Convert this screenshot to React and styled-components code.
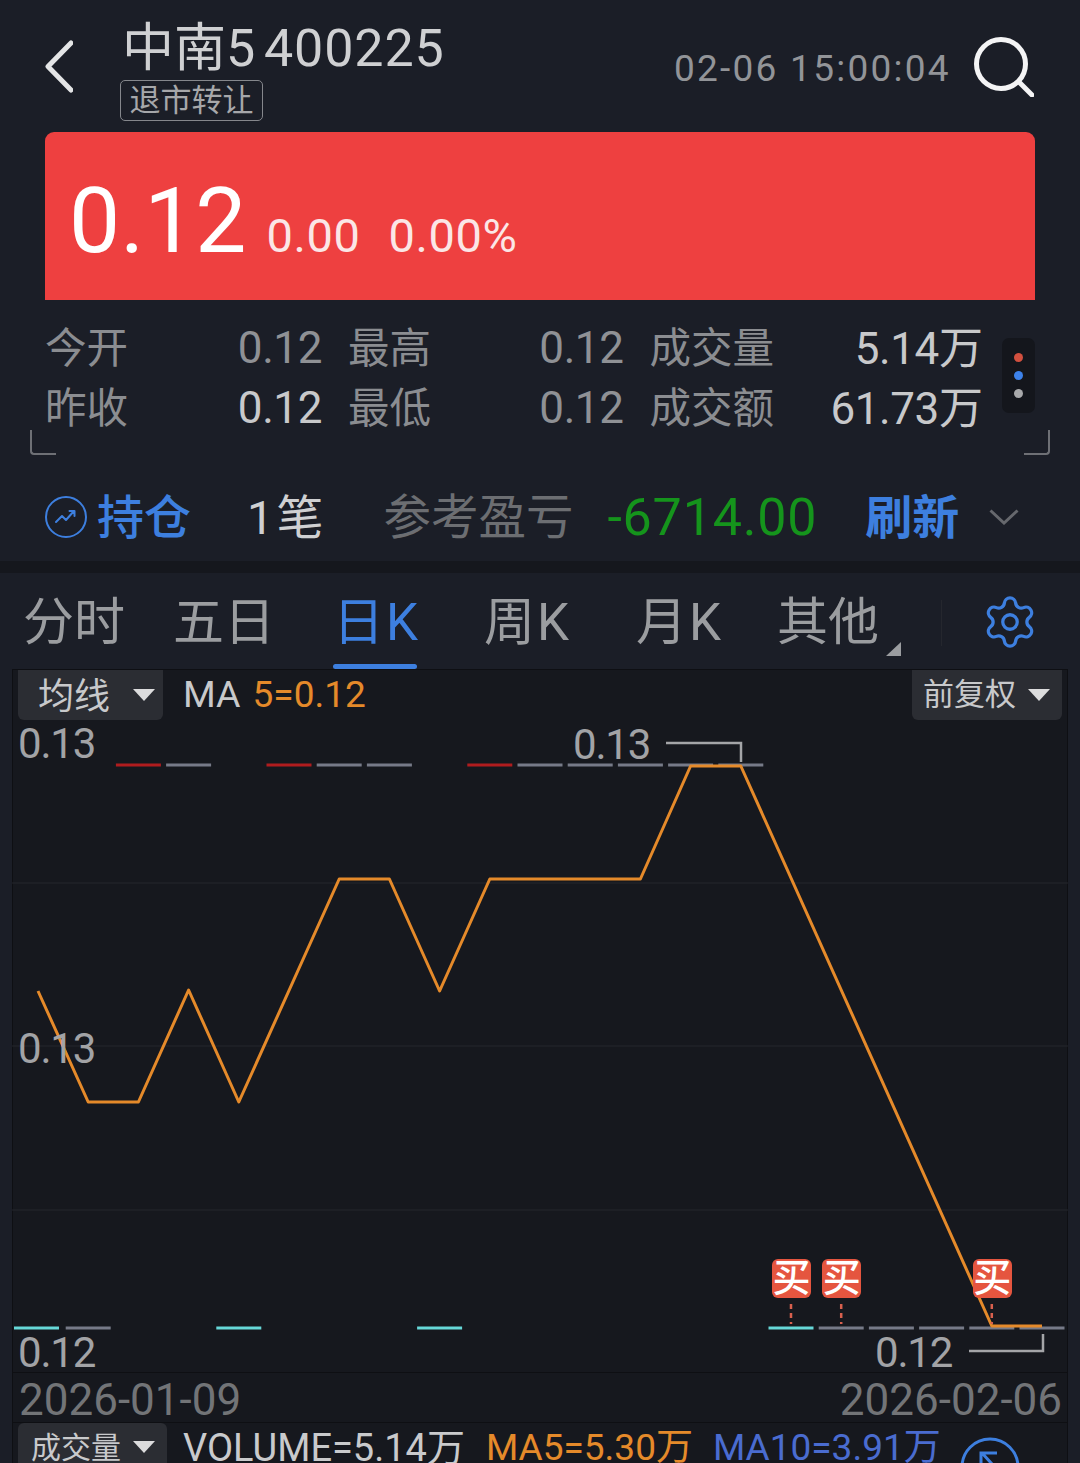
import React from 'react';
import styled, { createGlobalStyle } from 'styled-components';
import { Settings } from 'lucide-react';

const STEP = 50.2;
const xAt = (i) => 38 + STEP * i;

const LINE = [
  [0, 991], [1, 1102], [2, 1102], [3, 990], [4, 1102], [6, 879], [7, 879], [8, 991],
  [9, 879], [12, 879], [13, 766], [14, 766], [19, 1326], [20, 1326],
];
const TOP_DASHES = [[2, '#b01c1e'], [3, '#767a88'], [5, '#b01c1e'], [6, '#767a88'], [7, '#767a88'], [9, '#b01c1e'], [10, '#767a88'], [11, '#767a88'], [12, '#767a88'], [13, '#767a88'], [14, '#767a88']];
const BOTTOM_DASHES = [[-0.03, '#66d8d8'], [1, '#767a88'], [4, '#66d8d8'], [8, '#66d8d8'], [15, '#66d8d8'], [16, '#767a88'], [17, '#767a88'], [18, '#767a88'], [19, '#767a88'], [20, '#767a88']];
const BUY_MARKS = [15, 16, 19];
const GRID_Y = [883, 1046, 1210];

const App = () => {
  return (
    <Page>
      <GlobalStyle />
      <Header>
        <BackIcon viewBox="0 0 28 54">
          <path d="M26 3 L3 26.5 L26 50" />
        </BackIcon>
        <TitleBlock>
          <Title><TitleName>中南</TitleName>5 400225</Title>
          <Tag>退市转让</Tag>
        </TitleBlock>
        <Clock>02-06 15:00:04</Clock>
        <SearchIcon viewBox="0 0 60 60">
          <circle cx="27" cy="27" r="24.5" />
          <path d="M45 45 L58 58" />
        </SearchIcon>
      </Header>

      <PriceCard>
        <BigPrice>0.12</BigPrice>
        <Change>0.00</Change>
        <Change>0.00%</Change>
      </PriceCard>

      <Stats>
        <StatGrid>
          <Stat><StatLabel>今开</StatLabel><StatValue>0.12</StatValue></Stat>
          <Stat><StatLabel>最高</StatLabel><StatValue>0.12</StatValue></Stat>
          <Stat><StatLabel>成交量</StatLabel><StatValue $light $unit>5.14万</StatValue></Stat>
          <Stat><StatLabel>昨收</StatLabel><StatValue $light>0.12</StatValue></Stat>
          <Stat><StatLabel>最低</StatLabel><StatValue>0.12</StatValue></Stat>
          <Stat><StatLabel>成交额</StatLabel><StatValue $light $unit>61.73万</StatValue></Stat>
        </StatGrid>
        <DotsPill>
          <Dot $color="#d2503f" />
          <Dot $color="#3d82ea" />
          <Dot $color="#a8a9ab" />
        </DotsPill>
        <Corner $side="left" />
        <Corner $side="right" />
      </Stats>

      <PositionRow>
        <TrendIcon viewBox="0 0 42 42">
          <circle cx="21" cy="21" r="20" />
          <path d="M11 26 L17 20 L21 24 L29 15 M24.5 15 H29.5 V20" />
        </TrendIcon>
        <PositionTitle>持仓</PositionTitle>
        <PositionCount>1笔</PositionCount>
        <PnlLabel>参考盈亏</PnlLabel>
        <PnlValue>-6714.00</PnlValue>
        <Refresh>刷新</Refresh>
        <ChevronIcon viewBox="0 0 30 16">
          <path d="M1.5 1.5 L15 14 L28.5 1.5" />
        </ChevronIcon>
      </PositionRow>

      <Band />

      <Tabs>
        <Tab $left={23}>分时</Tab>
        <Tab $left={48}>五日</Tab>
        <Tab $left={58} $active $latin>日K</Tab>
        <Tab $left={64} $latin>周K</Tab>
        <Tab $left={65} $latin>月K</Tab>
        <Tab $left={54} $more>其他</Tab>
        <TabDivider />
        <GearBox>
          <Settings size={58} strokeWidth={1.35} color="#3d7fdf" />
        </GearBox>
      </Tabs>

      <ChartPanel>
        <Plot>
          <ChartSvg viewBox="12 669 1056 704">
            {GRID_Y.map((y) => (
              <line key={y} x1="12" x2="1068" y1={y} y2={y} stroke="#24262c" strokeWidth="1" />
            ))}
            {TOP_DASHES.map(([i, c]) => (
              <rect key={i} x={xAt(i) - 22.5} y="763.5" width="45" height="3" fill={c} />
            ))}
            {BOTTOM_DASHES.map(([i, c]) => (
              <rect key={i} x={xAt(i) - 22.5} y="1326.5" width="45" height="3" fill={c} />
            ))}
            <polyline
              points={LINE.map(([i, y]) => `${xAt(i)},${y}`).join(' ')}
              fill="none"
              stroke="#e58a2a"
              strokeWidth="3"
              strokeLinejoin="round"
            />
            {BUY_MARKS.map((i) => (
              <line key={i} x1={xAt(i)} x2={xAt(i)} y1="1304" y2="1324" stroke="#d8604e" strokeWidth="2.5" strokeDasharray="5 4" />
            ))}
            <path d="M666 743 H741 V762" fill="none" stroke="#a4a5a8" strokeWidth="2.5" />
            <path d="M969 1351 H1043 V1334" fill="none" stroke="#a4a5a8" strokeWidth="2.5" />
          </ChartSvg>

          <Toolbar>
            <Dropdown $width={145}>
              <DropdownText>均线</DropdownText>
              <Caret />
            </Dropdown>
            <MaLabel>MA</MaLabel>
            <MaValue>5=0.12</MaValue>
            <Spacer />
            <Dropdown $width={150} $small>
              <DropdownText $small>前复权</DropdownText>
              <Caret />
            </Dropdown>
          </Toolbar>

          <PriceTag $x={6} $y={51}>0.13</PriceTag>
          <PriceTag $x={6} $y={356}>0.13</PriceTag>
          <PriceTag $x={6} $y={660}>0.12</PriceTag>
          <PriceTag $x={561} $y={52}>0.13</PriceTag>
          <PriceTag $x={863} $y={660}>0.12</PriceTag>

          {BUY_MARKS.map((i) => (
            <BuyMark key={i} style={{ left: xAt(i) - 12 - 19 }}>买</BuyMark>
          ))}
        </Plot>

        <DateRow>
          <DateText>2026-01-09</DateText>
          <DateText>2026-02-06</DateText>
        </DateRow>

        <VolumeRow>
          <Dropdown $width={149} $tall>
            <DropdownText $tall>成交量</DropdownText>
            <Caret />
          </Dropdown>
          <VolText $color="#c9cacc" $left={16}>VOLUME=5.14万</VolText>
          <VolText $color="#e58a2a" $left={21} $narrow>MA5=5.30万</VolText>
          <VolText $color="#4a6cd0" $left={20} $narrow>MA10=3.91万</VolText>
          <RestoreIcon viewBox="0 0 60 60">
            <circle cx="30" cy="30" r="28" />
            <path d="M22 16 L42 38 M21 32 V16 H37" />
          </RestoreIcon>
        </VolumeRow>
      </ChartPanel>
    </Page>
  );
};

export default App;

const GlobalStyle = createGlobalStyle`
  html, body {
    margin: 0;
    padding: 0;
    background: #1b1e27;
  }
  * {
    box-sizing: border-box;
  }
`;

const Page = styled.div`
  width: 1080px;
  height: 1463px;
  overflow: hidden;
  background: #1b1e27;
  font-family: Roboto, "Noto Sans CJK SC", sans-serif;
`;

const Header = styled.header`
  height: 132px;
  display: flex;
  align-items: flex-start;
  padding-left: 45px;
`;

const BackIcon = styled.svg`
  width: 28px;
  height: 54px;
  margin-top: 40px;
  fill: none;
  stroke: #e4e5e6;
  stroke-width: 5;
  stroke-linecap: round;
  stroke-linejoin: round;
`;

const TitleBlock = styled.div`
  margin-left: 47px;
  display: flex;
  flex-direction: column;
  align-items: flex-start;
  width: 548px;
`;

const Title = styled.div`
  margin-top: 19px;
  margin-left: 2px;
  font-size: 52px;
  line-height: 60px;
  letter-spacing: 0.9px;
  word-spacing: -6px;
  color: #cfd0d2;
  white-space: nowrap;
`;

const TitleName = styled.span`
  letter-spacing: 0;
`;

const Tag = styled.div`
  margin-top: 1px;
  width: 143px;
  height: 41px;
  border: 1.5px solid #85878c;
  border-radius: 5px;
  font-size: 31px;
  line-height: 40px;
  text-align: center;
  color: #a6a7aa;
  white-space: nowrap;
`;

const Clock = styled.div`
  margin-top: 47px;
  margin-left: 6px;
  width: 300px;
  font-size: 37px;
  line-height: 44px;
  letter-spacing: 2.25px;
  color: #929498;
  white-space: nowrap;
`;

const SearchIcon = styled.svg`
  width: 60px;
  height: 60px;
  margin-top: 37px;
  fill: none;
  stroke: #f4f4f5;
  stroke-width: 5;
  stroke-linecap: round;
`;

const PriceCard = styled.section`
  width: 990px;
  height: 168px;
  margin-left: 45px;
  padding: 32px 0 0 24px;
  display: flex;
  align-items: baseline;
  background: #ee4040;
  border-radius: 9px 9px 0 0;
  color: #fff;
`;

const BigPrice = styled.div`
  font-size: 91px;
  line-height: 114px;
  margin-right: 20px;
`;

const Change = styled.div`
  font-size: 47px;
  letter-spacing: 0.6px;
  margin-right: 28px;
  color: #fbe6e6;
`;

const Stats = styled.section`
  position: relative;
  height: 155px;
  padding: 18px 45px 0 45px;
  display: flex;
  align-items: flex-start;
`;

const StatGrid = styled.div`
  display: grid;
  grid-template-columns: 277px 275.5px 333px;
  grid-auto-rows: 60px;
  column-gap: 26px;
  width: 938px;
`;

const Stat = styled.div`
  display: flex;
  justify-content: space-between;
  align-items: center;
  white-space: nowrap;
`;

const StatLabel = styled.span`
  margin-bottom: 6px;
  font-size: 41.5px;
  color: #8b8d91;
`;

const StatValue = styled.span`
  margin-bottom: ${(props) => (props.$unit ? '6px' : '0')};
  font-size: 44px;
  letter-spacing: -0.4px;
  color: ${(props) => (props.$light ? '#c8c9cb' : '#8f9195')};
`;

const DotsPill = styled.div`
  margin: 20px 0 0 19px;
  width: 33px;
  height: 75px;
  display: flex;
  flex-direction: column;
  align-items: center;
  justify-content: center;
  gap: 9px;
  background: #14161c;
  border-radius: 7px;
`;

const Dot = styled.span`
  width: 9px;
  height: 9px;
  border-radius: 50%;
  background: ${(props) => props.$color};
`;

const Corner = styled.span`
  position: absolute;
  top: 130px;
  ${(props) => (props.$side === 'left' ? 'left: 30px;' : 'right: 30px;')}
  width: 26px;
  height: 25px;
  border-bottom: 2px solid #6e7075;
  ${(props) => (props.$side === 'left' ? 'border-left: 2px solid #6e7075;' : 'border-right: 2px solid #6e7075;')}
  border-radius: ${(props) => (props.$side === 'left' ? '0 0 0 4px' : '0 0 4px 0')};
`;

const PositionRow = styled.section`
  height: 106px;
  padding: 10px 0 0 45px;
  display: flex;
  align-items: center;
  font-size: 47px;
  white-space: nowrap;
`;

const TrendIcon = styled.svg`
  width: 42px;
  height: 42px;
  margin-top: 8px;
  fill: none;
  stroke: #3d7fdf;
  stroke-width: 2;
  stroke-linecap: round;
  stroke-linejoin: round;
`;

const PositionTitle = styled.span`
  margin-left: 10px;
  font-weight: 500;
  color: #3d7fdf;
`;

const PositionCount = styled.span`
  margin-left: 56px;
  letter-spacing: 3px;
  color: #cfd0d2;
`;

const PnlLabel = styled.span`
  margin-left: 57px;
  font-size: 47.5px;
  color: #6c6e72;
`;

const PnlValue = styled.span`
  margin-left: 34px;
  margin-top: 8px;
  font-size: 52px;
  letter-spacing: 0.8px;
  color: #15941c;
`;

const Refresh = styled.span`
  margin-left: 48px;
  font-weight: 700;
  color: #3d7fdf;
`;

const ChevronIcon = styled.svg`
  margin: 8px 0 0 30px;
  width: 30px;
  height: 16px;
  fill: none;
  stroke: #66686d;
  stroke-width: 3;
`;

const Band = styled.div`
  height: 12px;
  background: #15171d;
`;

const Tabs = styled.nav`
  height: 96px;
  display: flex;
  align-items: center;
  padding-top: 4px;
  white-space: nowrap;
`;

const Tab = styled.div`
  position: relative;
  margin-left: ${(props) => props.$left}px;
  font-size: 51px;
  line-height: 60px;
  letter-spacing: ${(props) => (props.$latin ? '2px' : '0')};
  color: ${(props) => (props.$active ? '#3d7fdf' : '#9b9da0')};
  ${(props) => props.$active && `
    &::after {
      content: '';
      position: absolute;
      left: 0;
      width: 84px;
      bottom: -16px;
      height: 5px;
      border-radius: 3px;
      background: #3d7fdf;
    }
  `}
  ${(props) => props.$more && `
    &::after {
      content: '';
      position: absolute;
      right: -22px;
      bottom: -3px;
      border-style: solid;
      border-width: 0 0 14px 15px;
      border-color: transparent transparent #9b9da0 transparent;
    }
  `}
`;

const TabDivider = styled.div`
  margin-left: 62px;
  width: 1px;
  height: 46px;
  background: #25272e;
`;

const GearBox = styled.div`
  margin: 0 0 2px 39px;
  display: flex;
`;

const ChartPanel = styled.section`
  width: 1056px;
  margin-left: 12px;
  height: 794px;
  background: #16181e;
  border-top: 1px solid #0e0f13;
  box-shadow: inset 1px 0 #0e0f13, inset -1px 0 #0e0f13;
`;

const Plot = styled.div`
  position: relative;
  height: 703px;
  border-bottom: 1px solid #0e0f13;
`;

const ChartSvg = styled.svg`
  position: absolute;
  left: 0;
  top: -1px;
  width: 1056px;
  height: 704px;
`;

const Toolbar = styled.div`
  position: relative;
  display: flex;
  align-items: center;
  padding: 0 6px;
  white-space: nowrap;
`;

const Dropdown = styled.div`
  width: ${(props) => props.$width}px;
  height: ${(props) => (props.$tall ? '60px' : '50px')};
  padding: ${(props) => (props.$tall ? '0 12px 12px 13px' : props.$small ? '0 12px 0 11px' : '0 8px 0 20px')};
  display: flex;
  align-items: center;
  justify-content: space-between;
  background: #2b2d33;
  border-radius: ${(props) => (props.$tall ? '6px 6px 0 0' : '0 0 6px 6px')};
`;

const DropdownText = styled.span`
  margin-bottom: ${(props) => (props.$small ? '8px' : '4px')};
  font-size: ${(props) => (props.$tall ? '30px' : props.$small ? '31px' : '36px')};
  color: #c8c9cb;
`;

const Caret = styled.span`
  width: 0;
  height: 0;
  border-style: solid;
  border-width: 12px 11.5px 0 11.5px;
  border-color: #dcdcdd transparent transparent transparent;
`;

const MaLabel = styled.span`
  margin: 0 0 2px 20px;
  font-size: 37.5px;
  color: #c8c9cb;
`;

const MaValue = styled.span`
  margin: 0 0 2px 12px;
  font-size: 37px;
  color: #e58a2a;
`;

const Spacer = styled.div`
  flex: 1;
`;

const PriceTag = styled.span`
  position: absolute;
  left: ${(props) => props.$x}px;
  top: ${(props) => props.$y}px;
  font-size: 42px;
  line-height: 46px;
  letter-spacing: -1.2px;
  color: #a2a3a6;
`;

const BuyMark = styled.span`
  position: absolute;
  top: 589px;
  width: 39px;
  height: 39px;
  display: flex;
  align-items: center;
  justify-content: center;
  background: #e5553f;
  border-radius: 6px;
  color: #fff;
  font-size: 38px;
  font-weight: 500;
  line-height: 39px;
`;

const DateRow = styled.div`
  height: 50px;
  border-bottom: 1px solid #0e0f13;
  padding: 4px 6px 0 7px;
  display: flex;
  align-items: center;
  justify-content: space-between;
`;

const DateText = styled.span`
  font-size: 44px;
  color: #727477;
`;

const VolumeRow = styled.div`
  padding-left: 6px;
  display: flex;
  align-items: flex-start;
  white-space: nowrap;
`;

const VolText = styled.span`
  margin-left: ${(props) => props.$left}px;
  margin-top: 3px;
  font-size: ${(props) => (props.$narrow ? '37px' : '38px')};
  line-height: 44px;
  color: ${(props) => props.$color};
`;

const RestoreIcon = styled.svg`
  margin: 14px 0 0 19px;
  width: 60px;
  height: 60px;
  flex: none;
  fill: none;
  stroke: #3d7fdf;
  stroke-width: 3;
`;
